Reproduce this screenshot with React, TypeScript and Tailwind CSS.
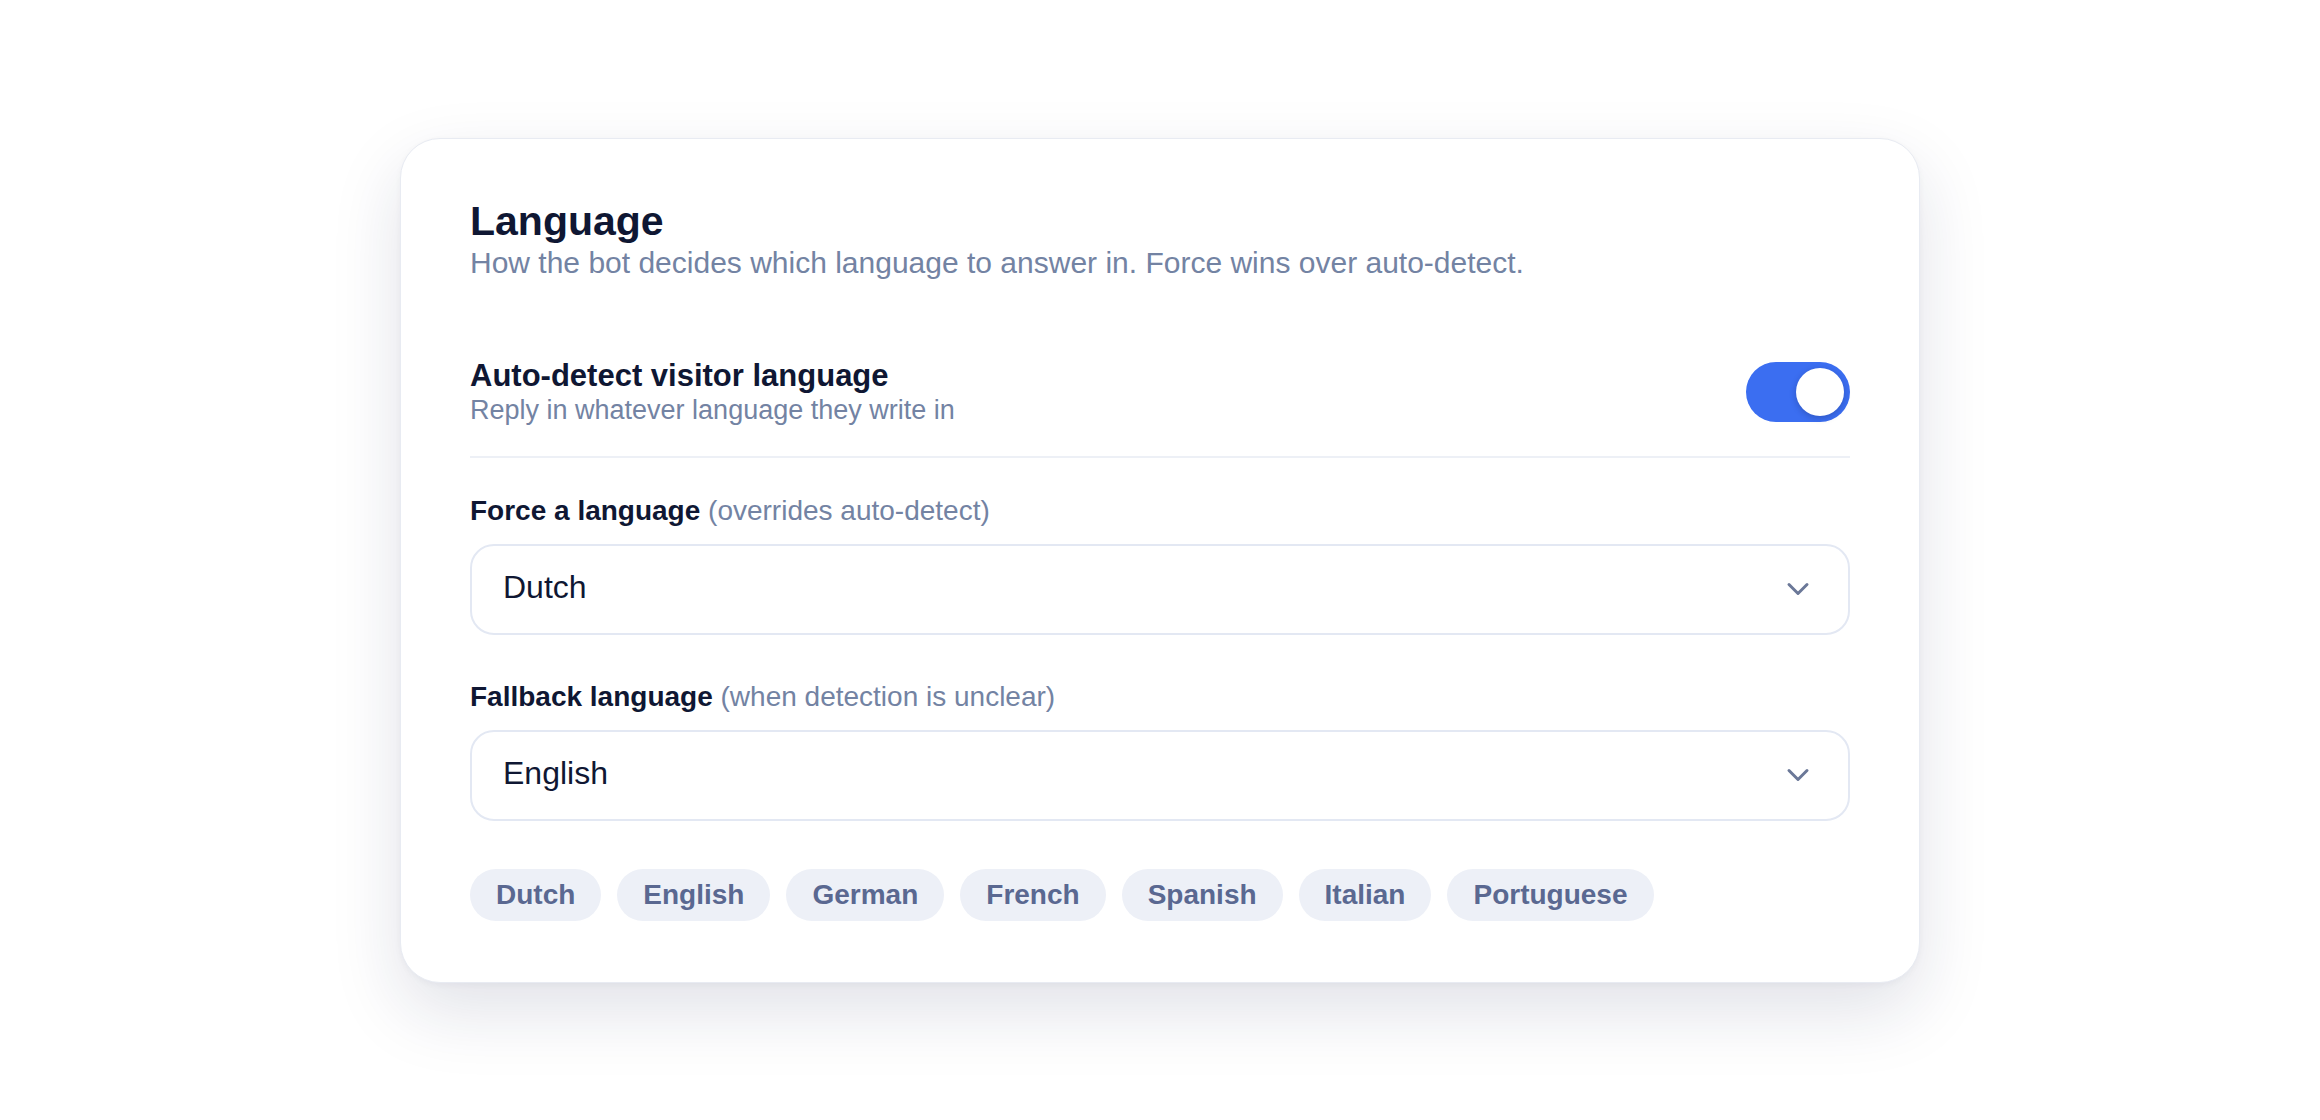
import React from "react";

function Chevron() {
  return (
    <svg width="36" height="36" viewBox="0 0 24 24" fill="none" stroke="#6b7898" strokeWidth="2" strokeLinecap="round" strokeLinejoin="round">
      <path d="m6 9 6 6 6-6" />
    </svg>
  );
}

function Select({ value }: { value: string }) {
  return (
    <div className="flex h-[91px] items-center justify-between rounded-[24px] border-2 border-[#e3e8f3] bg-white pl-[31px] pr-8">
      <span className="mb-[4px] text-[32px] leading-[40px] text-[#0f1733]">{value}</span>
      <Chevron />
    </div>
  );
}

export default function App() {
  const chips = ["Dutch", "English", "German", "French", "Spanish", "Italian", "Portuguese"];
  return (
    <div className="flex min-h-screen items-center justify-center bg-white font-['Liberation_Sans',Arial,sans-serif]">
      <div className="w-[1520px] rounded-[40px] border border-[#e8ebf2] bg-white px-[69px] pt-[58px] pb-[61px] shadow-[0_28px_70px_rgba(22,34,80,0.13),0_2px_6px_rgba(22,34,80,0.04)]">
        <div className="mb-[47px]">
          <h1 className="text-[41px] leading-[48px] font-bold text-[#0f1733]">Language</h1>
          <p className="text-[30px] leading-[36px] text-[#7383a3]">
            How the bot decides which language to answer in. Force wins over auto-detect.
          </p>
        </div>

        <div className="flex items-center justify-between border-b-2 border-[#edf0f6] py-[30px]">
          <div>
            <div className="text-[31px] leading-[36px] font-bold text-[#0f1733]">Auto-detect visitor language</div>
            <div className="text-[27px] leading-[32px] text-[#7383a3]">Reply in whatever language they write in</div>
          </div>
          <div className="flex h-[60px] w-[104px] items-center justify-end rounded-full bg-[#3b6ef1] pr-[6px]">
            <div className="h-[48px] w-[48px] rounded-full bg-white shadow-[0_2px_6px_rgba(15,23,60,0.25)]" />
          </div>
        </div>

        <div className="mt-[37px]">
          <div className="mb-[17px] text-[28px] leading-[32px] text-[#0f1733]">
            <span className="font-bold">Force a language</span>{" "}
            <span className="text-[#7383a3]">(overrides auto-detect)</span>
          </div>
          <Select value="Dutch" />
        </div>

        <div className="mt-[46px]">
          <div className="mb-[17px] text-[28px] leading-[32px] text-[#0f1733]">
            <span className="font-bold">Fallback language</span>{" "}
            <span className="text-[#7383a3]">(when detection is unclear)</span>
          </div>
          <Select value="English" />
        </div>

        <div className="mt-[48px] flex flex-wrap gap-4">
          {chips.map((c) => (
            <span
              key={c}
              className="flex h-[52px] items-center rounded-full bg-[#edf0f7] px-[26px] text-[28px] font-bold text-[#5a6891]"
            >
              {c}
            </span>
          ))}
        </div>
      </div>
    </div>
  );
}
